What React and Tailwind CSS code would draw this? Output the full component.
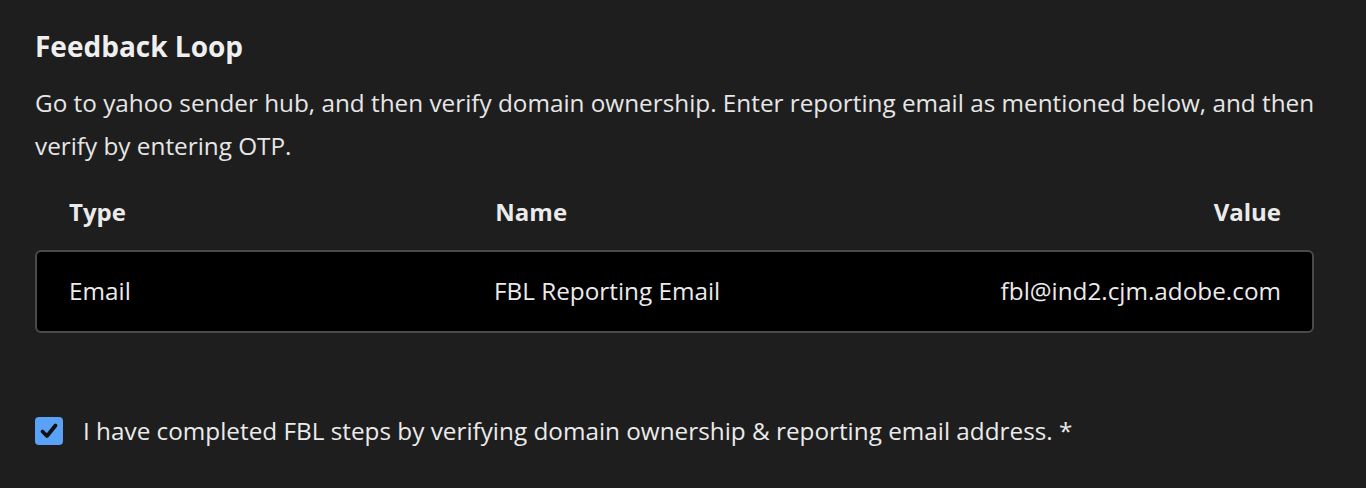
import React from 'react';

const rows = [
    { type: 'Email', name: 'FBL Reporting Email', value: 'fbl@ind2.cjm.adobe.com' },
];

const App = () => {
    return (
        <div className="w-[1366px] h-[488px] bg-[#1e1e1e] text-[#ebebeb] overflow-hidden" style={{ fontFamily: '"Open Sans", "Liberation Sans", sans-serif' }}>
            <div className="pl-[35px] pr-[52px] pt-[26px]">
                {/* Title */}
                <h2 className="text-[28px] font-bold leading-[40px] text-[#efefef]">Feedback Loop</h2>

                {/* Description */}
                <p className="mt-[15px] mr-[-8px] text-[24.3px] leading-[43px] text-[#e6e6e6]">
                    Go to yahoo sender hub, and then verify domain ownership. Enter reporting email as mentioned below, and then verify by entering OTP.
                </p>

                {/* Table */}
                <div className="mt-[15px]">
                    <div className="grid grid-cols-3 h-[60px] mb-[8px] items-center text-[24px] font-bold text-[#ebebeb]">
                        <div className="px-[34px]">Type</div>
                        <div className="px-[34px]">Name</div>
                        <div className="px-[33px] text-right">Value</div>
                    </div>
                    <div className="rounded-[6px] border-2 border-[#4a4a4a] bg-black">
                        {rows.map((row, index) => (
                            <div key={index} className="grid grid-cols-3 h-[79px] items-center text-[24.3px] text-[#ebebeb]">
                                <div className="px-[32px]">{row.type}</div>
                                <div className="px-[32px]">{row.name}</div>
                                <div className="px-[31px] text-right">{row.value}</div>
                            </div>
                        ))}
                    </div>
                </div>

                {/* Checkbox */}
                <label className="mt-[83px] flex items-center gap-[20px]">
                    <span className="w-[28px] h-[28px] rounded-[4px] bg-[#5aa2f8] flex items-center justify-center shrink-0">
                        <svg width="22" height="22" viewBox="0 0 22 22" fill="none">
                            <path d="M4.5 11.5 L9 16 L17.5 5.5" stroke="#111" strokeWidth="3.8" strokeLinecap="round" strokeLinejoin="round" />
                        </svg>
                    </span>
                    <span className="text-[24.3px] leading-[30px] text-[#ebebeb]">I have completed FBL steps by verifying domain ownership &amp; reporting email address. *</span>
                </label>
            </div>
        </div>
    );
};

export default App;
